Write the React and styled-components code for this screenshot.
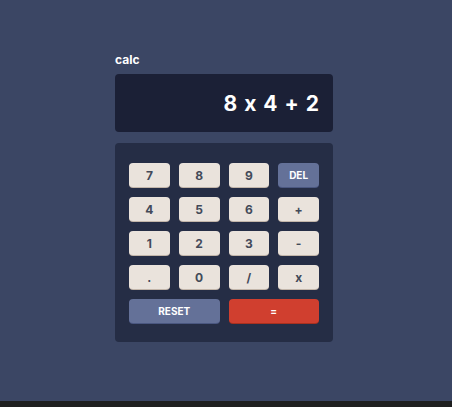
import React from "react";
import styled, { createGlobalStyle } from "styled-components";

const GlobalStyle = createGlobalStyle`
  html, body {
    margin: 0;
    padding: 0;
    background: #1e1f1f;
    font-family: "Inter", "Noto Sans", sans-serif;
    font-feature-settings: "calt" 0;
  }
`;

const Page = styled.div`
  height: 401px;
  background: #3b4664;
  display: flex;
  justify-content: center;
  padding-right: 4px;
  box-sizing: border-box;
`;

const Calculator = styled.div`
  width: 218px;
  padding-top: 53px;
`;

const Title = styled.h1`
  margin: 0 0 8px;
  height: 13px;
  font-size: 12px;
  line-height: 13px;
  font-weight: 700;
  color: #ffffff;
`;

const Screen = styled.div`
  height: 58px;
  background: #1b2036;
  border-radius: 4px;
  display: flex;
  align-items: center;
  justify-content: flex-end;
  padding: 0 14px;
  box-sizing: border-box;
  color: #ffffff;
  font-size: 21px;
  font-weight: 700;
  word-spacing: 2px;
`;

const Keypad = styled.div`
  margin-top: 11px;
  background: #252d45;
  border-radius: 4px;
  padding: 20px 14px 19px;
  display: grid;
  grid-template-columns: repeat(4, 1fr);
  grid-auto-rows: 24px;
  column-gap: 9px;
  row-gap: 10px;
`;

const Key = styled.button`
  border: none;
  border-radius: 4px;
  padding: 0;
  font-family: inherit;
  font-feature-settings: "calt" 0;
  font-weight: 700;
  cursor: pointer;
  grid-column: span ${(p) => p.span || 1};
  font-size: ${(p) => (p.variant === "num" ? "12px" : "10px")};
  color: ${(p) => (p.variant === "num" ? "#434a59" : "#ffffff")};
  background: ${(p) =>
    p.variant === "accent"
      ? "#647198"
      : p.variant === "equal"
      ? "#d03f2f"
      : "#eae3dc"};
  box-shadow: 0 1px 0
    ${(p) =>
      p.variant === "accent"
        ? "#4a5780"
        : p.variant === "equal"
        ? "#a8301f"
        : "#c3b6aa"};
`;

const keys = [
  "7", "8", "9", "DEL",
  "4", "5", "6", "+",
  "1", "2", "3", "-",
  ".", "0", "/", "x",
];

const App = () => {
  return (
    <>
      <GlobalStyle />
      <Page>
        <Calculator>
          <Title>calc</Title>
          <Screen>8 x 4 + 2</Screen>
          <Keypad>
            {keys.map((k) => (
              <Key key={k} variant={k === "DEL" ? "accent" : "num"}>
                {k}
              </Key>
            ))}
            <Key span={2} variant="accent">RESET</Key>
            <Key span={2} variant="equal">=</Key>
          </Keypad>
        </Calculator>
      </Page>
    </>
  );
};

export default App;
